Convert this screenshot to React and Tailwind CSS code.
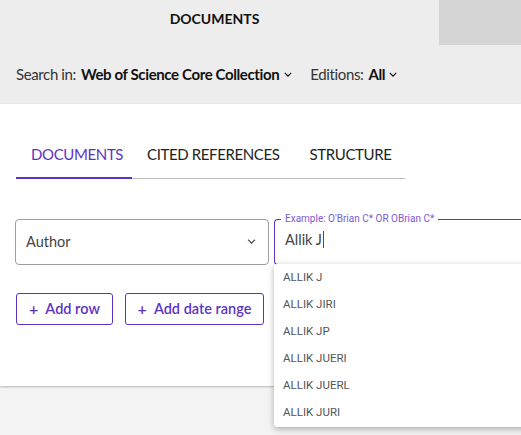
import React from "react";

const font = { fontFamily: "Lato, 'Open Sans', sans-serif" };

const Chevron = ({ className = "" }) => (
  <svg viewBox="0 0 10 6" className={className} fill="none" stroke="currentColor" strokeWidth="1.6">
    <path d="M1 1l4 4 4-4" />
  </svg>
);

const suggestions = ["ALLIK J", "ALLIK JIRI", "ALLIK JP", "ALLIK JUERI", "ALLIK JUERL", "ALLIK JURI"];

export default function App() {
  return (
    <div className="w-[521px] h-[435px] overflow-hidden bg-[#f3f3f3] text-[#222]" style={font}>
      {/* header */}
      <div className="h-[104px] bg-[#ededed]">
        <div className="flex h-[45px]">
          <div className="flex-1 flex justify-center pt-[8px] pr-[10px]">
            <span className="text-[14px] font-bold text-[#111]">DOCUMENTS</span>
          </div>
          <div className="w-[82px] bg-[#d5d5d5]" />
        </div>
        <div className="flex items-center pl-[16px] pt-[18px] text-[15px] tracking-tight">
          <span className="text-[#333]">Search in:</span>
          <span className="ml-[5px] font-bold text-[#111]">Web of Science Core Collection</span>
          <Chevron className="ml-[5px] w-[8px] h-[5px] text-[#111]" />
          <span className="ml-[18px] text-[#333]">Editions:</span>
          <span className="ml-[5px] font-bold text-[#111]">All</span>
          <Chevron className="ml-[4px] w-[8px] h-[5px] text-[#111]" />
        </div>
      </div>

      {/* main panel */}
      <div className="relative h-[282px] bg-white shadow-[0_1px_2px_rgba(0,0,0,0.25)]">
        <div className="pt-[39px] pl-[16px]">
          <div className="flex w-[389px] border-b border-[#bdbdbd] text-[15px] tracking-tight">
            <div className="w-[116px] shrink-0 pl-[15px] pb-[11px] border-b-2 border-[#5e33bf] -mb-px text-[#5e33bf]">DOCUMENTS</div>
            <div className="pl-[15px] pb-[11px] text-[#222]">CITED REFERENCES</div>
            <div className="pl-[30px] pb-[11px] text-[#222]">STRUCTURE</div>
          </div>
        </div>

        <div className="flex mt-[40px] pl-[15px] gap-[5px]">
          <div className="w-[254px] shrink-0 h-[46px] border border-[#9e9e9e] rounded-[4px] flex items-center justify-between pl-[10px] pr-[12px]">
            <span className="text-[14.5px] text-[#444]">Author</span>
            <Chevron className="w-[9px] h-[5px] text-[#555]" />
          </div>
          <div className="relative w-[260px] shrink-0 h-[46px] border border-[#5e33bf] border-r-0 rounded-l-[4px] pl-[10px]">
            <span className="absolute -top-[7px] left-[6px] bg-white px-[4px] text-[10px] leading-[12px] text-[#7b5cd0]" style={{ fontFamily: "Roboto, sans-serif" }}>
              Example: O'Brian C* OR OBrian C*
            </span>
            <div className="pt-[9px] flex items-center text-[14.5px] text-[#444]">
              Allik J<span className="ml-px w-px h-[17px] bg-[#5e33bf]" />
            </div>
          </div>
        </div>

        <div className="flex gap-[12px] mt-[28px] pl-[16px]">
          <button className="h-[32px] w-[97px] border border-[#5e33bf] rounded-[3px] text-[#5e33bf] text-[14.5px] font-semibold flex items-center justify-center gap-[7px]">
            <span className="text-[16px]">+</span>Add row
          </button>
          <button className="h-[32px] w-[139px] border border-[#5e33bf] rounded-[3px] text-[#5e33bf] text-[14.5px] font-semibold flex items-center justify-center gap-[7px]">
            <span className="text-[16px]">+</span>Add date range
          </button>
        </div>

        {/* suggestion menu */}
        <div
          className="absolute left-[274px] top-[160px] w-[260px] bg-white rounded-[3px] shadow-[0_2px_6px_rgba(0,0,0,0.3)] pb-[1px] z-10"
          style={{ fontFamily: "Roboto, sans-serif" }}
        >
          {suggestions.map((s) => (
            <div key={s} className="h-[27px] flex items-center pl-[9px] text-[11.5px] text-[#555]">
              {s}
            </div>
          ))}
        </div>
      </div>
    </div>
  );
}
